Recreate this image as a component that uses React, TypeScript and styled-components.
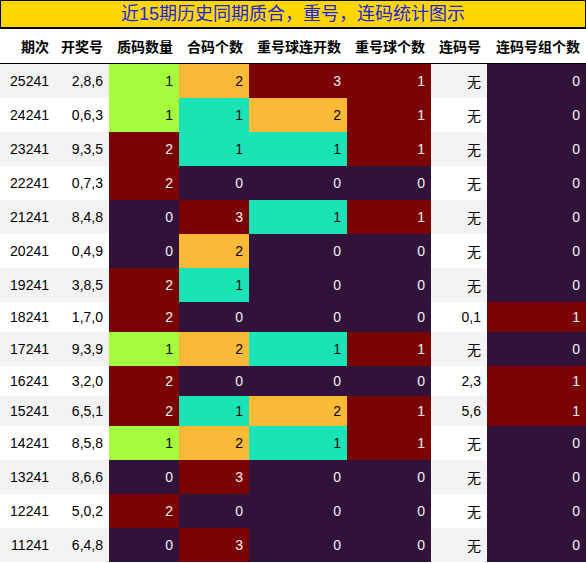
import React, { FunctionComponent } from 'react'
import styled, { createGlobalStyle } from 'styled-components'

const GlobalStyle = createGlobalStyle`
	html, body
	{
		margin: 0;
		padding: 0;
		background: #ffffff;
	}

	body
	{
		font-family: "Liberation Sans", "Noto Sans CJK SC", sans-serif;
	}
`


const Page = styled.div`
	width: 586px;
	display: flex;
	flex-direction: column;
`


const TitleBar = styled.div`
	height: 26px;
	background: #ffd700;
	border: 1px solid #000;
	border-bottom-width: 2px;
	box-sizing: content-box;
	display: flex;
	align-items: center;
	justify-content: center;
	color: #2323e0;
	font-size: 18px;
	line-height: 1;
`


const Table = styled.table`
	width: 586px;
	border-collapse: collapse;
	table-layout: fixed;
	font-size: 14px;
`


const HeadCell = styled.th`
	height: 34px;
	padding: 0 6px 0 0;
	text-align: right;
	font-weight: bold;
	color: #000;
	background: #fff;
	border-bottom: 1px solid #000;
	white-space: nowrap;
`


const PlainCell = styled.td<{ $striped: boolean }>`
	padding: 0 6px 0 0;
	text-align: right;
	color: #000;
	background: ${p => p.$striped ? '#f3f3f3' : '#ffffff'};
	white-space: nowrap;
`


const HeatCell = styled.td<{ $bg: string, $fg: string }>`
	padding: 0 6px 0 0;
	text-align: right;
	background: ${p => p.$bg};
	color: ${p => p.$fg};
	white-space: nowrap;
`


const Row = styled.tr<{ $tall: boolean }>`
	height: ${p => p.$tall ? '34px' : '30px'};
`


// turbo colormap stops used by the chart
const turbo = (t: number): string => {
	if (t <= 0) return '#30123b'
	if (t < 0.4) return '#1ae4b6'
	if (t < 0.6) return '#a4fc3c'
	if (t < 0.9) return '#fbb938'
	return '#7a0403'
}

const isDark = (c: string) => c === '#30123b' || c === '#7a0403'


type Draw = {
	issue: string
	nums: string
	prime: number
	composite: number
	repeatRun: number
	repeatCount: number
	pair: string
	pairCount: number
}


const draws: Draw[] = [
	{issue: '25241', nums: '2,8,6', prime: 1, composite: 2, repeatRun: 3, repeatCount: 1, pair: '无', pairCount: 0}
	, {issue: '24241', nums: '0,6,3', prime: 1, composite: 1, repeatRun: 2, repeatCount: 1, pair: '无', pairCount: 0}
	, {issue: '23241', nums: '9,3,5', prime: 2, composite: 1, repeatRun: 1, repeatCount: 1, pair: '无', pairCount: 0}
	, {issue: '22241', nums: '0,7,3', prime: 2, composite: 0, repeatRun: 0, repeatCount: 0, pair: '无', pairCount: 0}
	, {issue: '21241', nums: '8,4,8', prime: 0, composite: 3, repeatRun: 1, repeatCount: 1, pair: '无', pairCount: 0}
	, {issue: '20241', nums: '0,4,9', prime: 0, composite: 2, repeatRun: 0, repeatCount: 0, pair: '无', pairCount: 0}
	, {issue: '19241', nums: '3,8,5', prime: 2, composite: 1, repeatRun: 0, repeatCount: 0, pair: '无', pairCount: 0}
	, {issue: '18241', nums: '1,7,0', prime: 2, composite: 0, repeatRun: 0, repeatCount: 0, pair: '0,1', pairCount: 1}
	, {issue: '17241', nums: '9,3,9', prime: 1, composite: 2, repeatRun: 1, repeatCount: 1, pair: '无', pairCount: 0}
	, {issue: '16241', nums: '3,2,0', prime: 2, composite: 0, repeatRun: 0, repeatCount: 0, pair: '2,3', pairCount: 1}
	, {issue: '15241', nums: '6,5,1', prime: 2, composite: 1, repeatRun: 2, repeatCount: 1, pair: '5,6', pairCount: 1}
	, {issue: '14241', nums: '8,5,8', prime: 1, composite: 2, repeatRun: 1, repeatCount: 1, pair: '无', pairCount: 0}
	, {issue: '13241', nums: '8,6,6', prime: 0, composite: 3, repeatRun: 0, repeatCount: 0, pair: '无', pairCount: 0}
	, {issue: '12241', nums: '5,0,2', prime: 2, composite: 0, repeatRun: 0, repeatCount: 0, pair: '无', pairCount: 0}
	, {issue: '11241', nums: '6,4,8', prime: 0, composite: 3, repeatRun: 0, repeatCount: 0, pair: '无', pairCount: 0}
]


const headers = ['期次', '开奖号', '质码数量', '合码个数', '重号球连开数', '重号球个数', '连码号', '连码号组个数']
const widths = [55, 54, 70, 70, 98, 84, 56, 99]


const Heat: FunctionComponent<{ value: number, max: number }> = ({value, max}) => {
	const bg = turbo(value / max)
	return (
		<HeatCell $bg={bg} $fg={isDark(bg) ? '#f1f1f1' : '#000000'}>
			{value}
		</HeatCell>
	)
}


const App: FunctionComponent = () => (
	<Page>
		<GlobalStyle />
		<TitleBar>近15期历史同期质合，重号，连码统计图示</TitleBar>
		<Table>
			<colgroup>
				{widths.map((w, i) => <col key={i} style={{width: w}} />)}
			</colgroup>
			<thead>
				<tr>
					{headers.map(h => <HeadCell key={h}>{h}</HeadCell>)}
				</tr>
			</thead>
			<tbody>
				{draws.map((d, i) => (
					<Row key={d.issue} $tall={d.pair === '无'}>
						<PlainCell $striped={i % 2 === 0}>{d.issue}</PlainCell>
						<PlainCell $striped={i % 2 === 0}>{d.nums}</PlainCell>
						<Heat value={d.prime} max={2} />
						<Heat value={d.composite} max={3} />
						<Heat value={d.repeatRun} max={3} />
						<Heat value={d.repeatCount} max={1} />
						<PlainCell $striped={i % 2 === 0}>{d.pair}</PlainCell>
						<Heat value={d.pairCount} max={1} />
					</Row>
				))}
			</tbody>
		</Table>
	</Page>
)


export default App
